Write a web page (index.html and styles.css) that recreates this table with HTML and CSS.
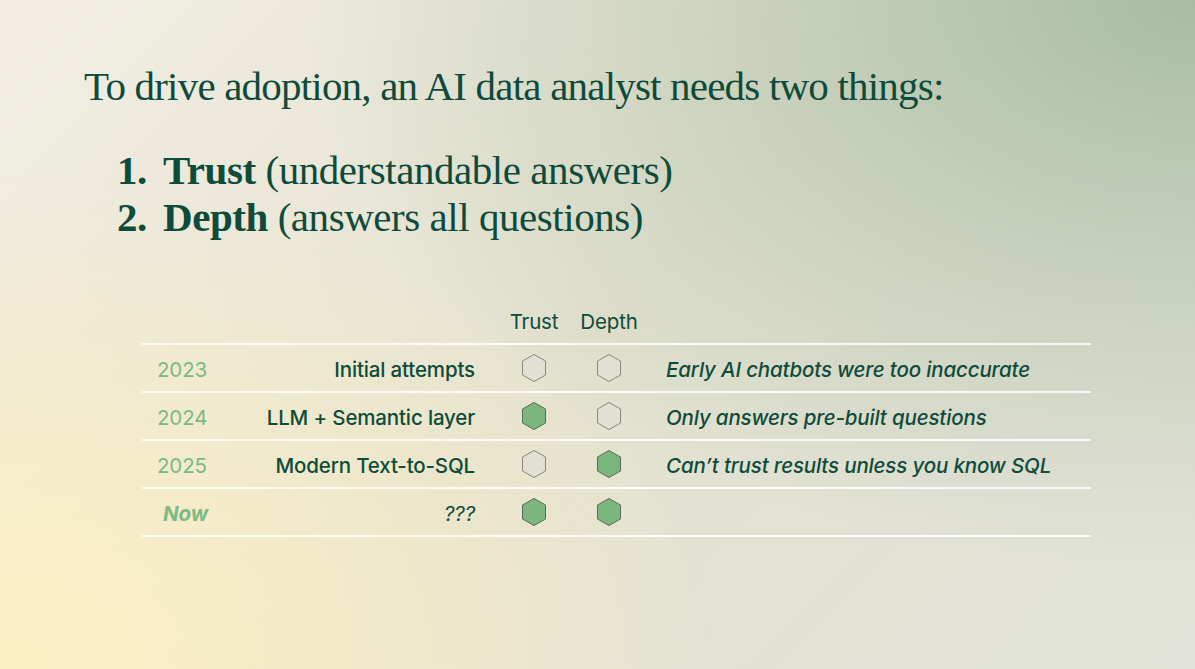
FILE: index.html
```html
<!DOCTYPE html>
<html lang="en">
<head>
<meta charset="utf-8">
<title>AI data analyst</title>
<link rel="stylesheet" href="styles.css">
</head>
<body>
<main class="slide">
  <h1 class="title">To drive adoption, an AI data analyst needs two things:</h1>
  <ol class="needs">
    <li><span class="num">1.</span><span><b>Trust</b> (understandable answers)</span></li>
    <li><span class="num">2.</span><span><b>Depth</b> (answers all questions)</span></li>
  </ol>

  <div class="table">
    <div class="row head">
      <div class="c-year"></div>
      <div class="c-label"></div>
      <div class="c-mark">Trust</div>
      <div class="c-mark">Depth</div>
      <div class="c-desc"></div>
    </div>
    <div class="row">
      <div class="c-year">2023</div>
      <div class="c-label">Initial attempts</div>
      <div class="c-mark"><svg class="hex" viewBox="0 0 26 30"><polygon class="off" points="13,1.5 24.5,8 24.5,22 13,28.5 1.5,22 1.5,8"/></svg></div>
      <div class="c-mark"><svg class="hex" viewBox="0 0 26 30"><polygon class="off" points="13,1.5 24.5,8 24.5,22 13,28.5 1.5,22 1.5,8"/></svg></div>
      <div class="c-desc">Early AI chatbots were too inaccurate</div>
    </div>
    <div class="row">
      <div class="c-year">2024</div>
      <div class="c-label">LLM + Semantic layer</div>
      <div class="c-mark"><svg class="hex" viewBox="0 0 26 30"><polygon class="on" points="13,1.5 24.5,8 24.5,22 13,28.5 1.5,22 1.5,8"/></svg></div>
      <div class="c-mark"><svg class="hex" viewBox="0 0 26 30"><polygon class="off" points="13,1.5 24.5,8 24.5,22 13,28.5 1.5,22 1.5,8"/></svg></div>
      <div class="c-desc">Only answers pre-built questions</div>
    </div>
    <div class="row">
      <div class="c-year">2025</div>
      <div class="c-label">Modern Text-to-SQL</div>
      <div class="c-mark"><svg class="hex" viewBox="0 0 26 30"><polygon class="off" points="13,1.5 24.5,8 24.5,22 13,28.5 1.5,22 1.5,8"/></svg></div>
      <div class="c-mark"><svg class="hex" viewBox="0 0 26 30"><polygon class="on" points="13,1.5 24.5,8 24.5,22 13,28.5 1.5,22 1.5,8"/></svg></div>
      <div class="c-desc">Can’t trust results unless you know SQL</div>
    </div>
    <div class="row">
      <div class="c-year now">Now</div>
      <div class="c-label unknown">???</div>
      <div class="c-mark"><svg class="hex" viewBox="0 0 26 30"><polygon class="on" points="13,1.5 24.5,8 24.5,22 13,28.5 1.5,22 1.5,8"/></svg></div>
      <div class="c-mark"><svg class="hex" viewBox="0 0 26 30"><polygon class="on" points="13,1.5 24.5,8 24.5,22 13,28.5 1.5,22 1.5,8"/></svg></div>
      <div class="c-desc"></div>
    </div>
  </div>
</main>
</body>
</html>
```

FILE: styles.css
```css
* { box-sizing: border-box; }

html, body {
  margin: 0;
  padding: 0;
  width: 1195px;
  height: 669px;
  overflow: hidden;
}

body {
  background:
    radial-gradient(ellipse 75% 85% at 100% 0%, #a8bca3 0%, rgba(168, 188, 163, 0.55) 40%, rgba(168, 188, 163, 0) 100%),
    radial-gradient(ellipse 60% 75% at 0% 100%, #fcefc3 0%, rgba(252, 239, 195, 0.6) 45%, rgba(252, 239, 195, 0) 100%),
    linear-gradient(135deg, #f2eee4 0%, #e4e2cf 50%, #e2e3da 100%);
  color: #0e4b3b;
}

.slide {
  padding: 62px 0 0 84px;
  display: flex;
  flex-direction: column;
}

.title {
  margin: 0;
  font-family: "Liberation Serif", "DejaVu Serif", serif;
  font-weight: 400;
  font-size: 41px;
  line-height: 48px;
  letter-spacing: -0.8px;
}

.needs {
  list-style: none;
  margin: 37px 0 0 33px;
  padding: 0;
  font-family: "Liberation Serif", "DejaVu Serif", serif;
  font-size: 41px;
  line-height: 47px;
  letter-spacing: -0.45px;
}

.needs li {
  display: flex;
}

.needs .num {
  width: 46px;
  font-weight: 700;
}

.needs b {
  font-weight: 700;
}

.table {
  margin: 62px 0 0 58px;
  width: 949px;
  font-family: Inter, "Liberation Sans", sans-serif;
  font-size: 20.5px;
  font-weight: 500;
  letter-spacing: -0.15px;
}

.row {
  display: grid;
  grid-template-columns: 100px 255px 74px 76px 1fr;
  align-items: center;
  height: 48px;
  padding-top: 3px;
  border-bottom: 2px solid rgba(255, 255, 255, 0.85);
}

.row.head {
  height: 42px;
  padding-top: 0;
  padding-bottom: 9px;
  align-items: end;
  line-height: 24px;
  font-weight: 400;
}

.c-year {
  padding-left: 15px;
  color: #7cb983;
  font-weight: 400;
}

.c-year.now {
  font-style: italic;
  font-weight: 700;
  padding-left: 21px;
}

.c-label {
  text-align: right;
  padding-right: 22px;
}

.c-label.unknown {
  font-style: italic;
  font-weight: 400;
}

.c-mark {
  display: flex;
  justify-content: center;
}

.c-desc {
  padding-left: 19px;
  font-style: italic;
}

.hex {
  width: 26px;
  height: 30px;
  display: block;
  margin-top: -3px;
}

.hex polygon {
  stroke-width: 1;
  stroke-linejoin: round;
}

.hex .off {
  fill: #e2dfd3;
  stroke: #86877f;
}

.hex .on {
  fill: #7bb67e;
  stroke: #56695a;
}
```
